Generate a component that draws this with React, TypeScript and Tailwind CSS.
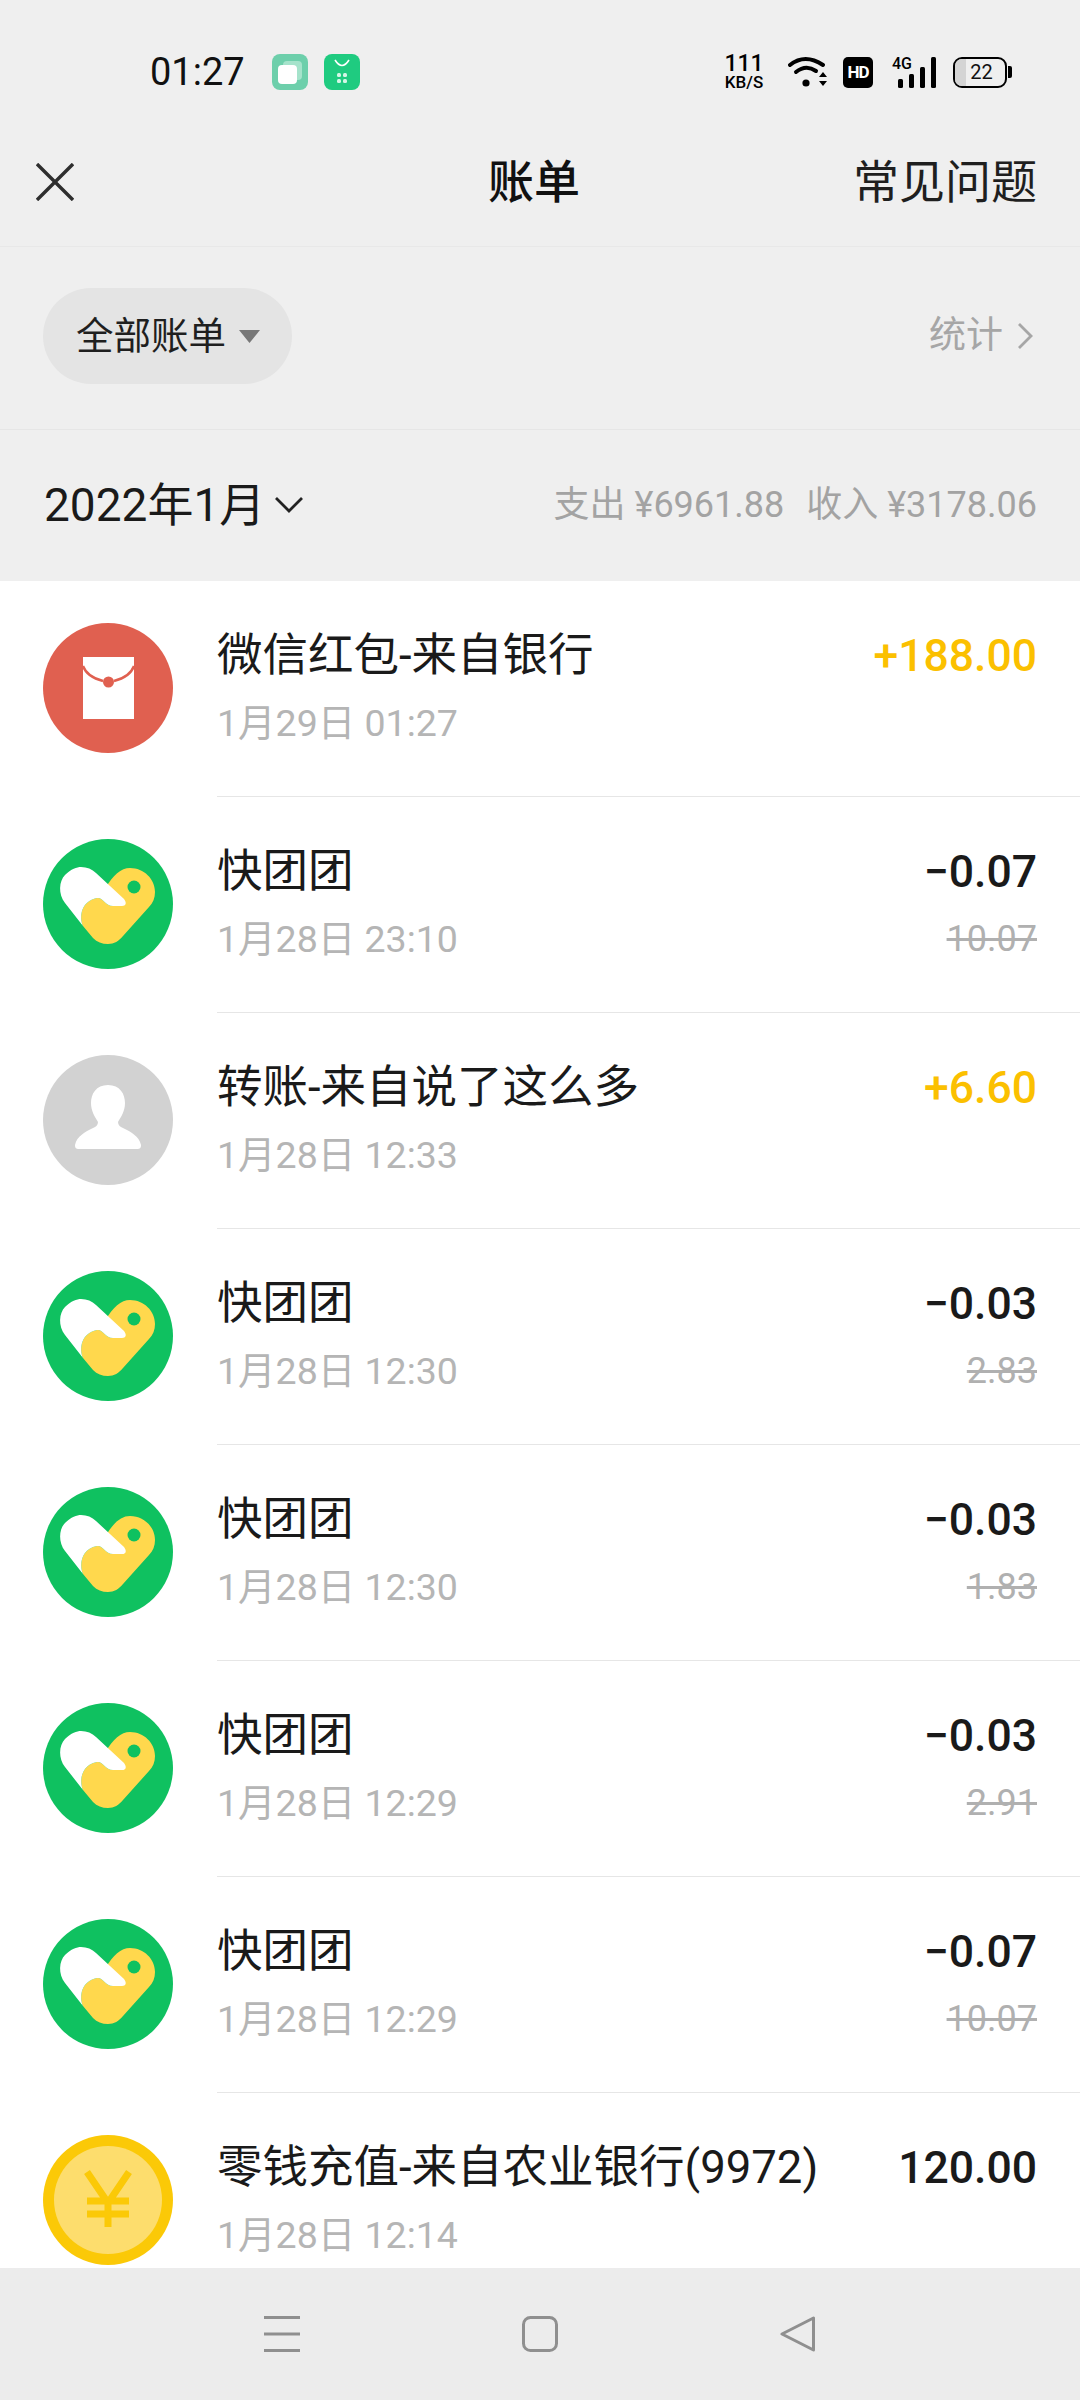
const font = "font-['Roboto','Noto_Sans_CJK_SC',sans-serif]"

type Bill = {
  icon: 'hongbao' | 'tuan' | 'user' | 'coin'
  title: string
  date: string
  amount: string
  income?: boolean
  original?: string
}

const bills: Bill[] = [
  { icon: 'hongbao', title: '微信红包-来自银行', date: '1月29日 01:27', amount: '+188.00', income: true },
  { icon: 'tuan', title: '快团团', date: '1月28日 23:10', amount: '−0.07', original: '10.07' },
  { icon: 'user', title: '转账-来自说了这么多', date: '1月28日 12:33', amount: '+6.60', income: true },
  { icon: 'tuan', title: '快团团', date: '1月28日 12:30', amount: '−0.03', original: '2.83' },
  { icon: 'tuan', title: '快团团', date: '1月28日 12:30', amount: '−0.03', original: '1.83' },
  { icon: 'tuan', title: '快团团', date: '1月28日 12:29', amount: '−0.03', original: '2.91' },
  { icon: 'tuan', title: '快团团', date: '1月28日 12:29', amount: '−0.07', original: '10.07' },
  { icon: 'coin', title: '零钱充值-来自农业银行(9972)', date: '1月28日 12:14', amount: '120.00' },
]

function BillIcon({ icon }: { icon: Bill['icon'] }) {
  if (icon === 'hongbao') {
    return (
      <svg viewBox="0 0 130 130" className="w-[130px] h-[130px] shrink-0">
        <circle cx="65" cy="65" r="65" fill="#e06050" />
        <path d="M40 34H91V96H40Z" fill="#fff" />
        <path d="M40 43Q44 54 60 58M71 58Q87 54 91 43" fill="none" stroke="#e06050" strokeWidth="2.4" />
        <circle cx="65.5" cy="59" r="5.5" fill="#e06050" />
      </svg>
    )
  }
  if (icon === 'tuan') {
    return (
      <svg viewBox="0 0 130 130" className="w-[130px] h-[130px] shrink-0">
        <circle cx="65" cy="65" r="65" fill="#0fc160" />
        <path
          d="M62 50C70 36 78 29 87 29C101 29 112 40 112 53C112 59 110 64 106 68L80 97C76 102 71 105 65 105C59 105 54 103 50 99L40 87C36 78 38 62 54 59C60 58 62 67 70 67L79 67Z"
          fill="#ffd84d"
        />
        <path
          d="M22 64C15 55 16 42 22 36C28 30 34 28 38 28C44 28 49 30 53 34L81 60C84 64 83 67 79 67L70 67C62 67 60 58 54 59C38 62 36 78 40 87Z"
          fill="#fff"
        />
        <circle cx="91" cy="48" r="6.5" fill="#0fc160" />
      </svg>
    )
  }
  if (icon === 'user') {
    return (
      <svg viewBox="0 0 130 130" className="w-[130px] h-[130px] shrink-0">
        <circle cx="65" cy="65" r="65" fill="#d2d2d2" />
        <path
          d="M65 30C77 30 82 39 82 48C82 56 78 62 75 67C75 70 77 72 80 73C88 77 96 81 98 90C98 93 97 94 94 94H36C33 94 32 93 32 90C34 81 42 77 50 73C53 72 55 70 55 67C52 62 48 56 48 48C48 39 53 30 65 30Z"
          fill="#fff"
        />
      </svg>
    )
  }
  return (
    <svg viewBox="0 0 130 130" className="w-[130px] h-[130px] shrink-0">
      <circle cx="65" cy="65" r="65" fill="#fbc907" />
      <circle cx="65" cy="65" r="54" fill="#fddd6d" />
      <path
        d="M44 37L65 68L86 37M65 68V92M44 66H86M44 79H86"
        fill="none"
        stroke="#fbc907"
        strokeWidth="7"
      />
    </svg>
  )
}

function BillRow({ bill }: { bill: Bill }) {
  return (
    <div className="flex h-[216px] shrink-0 items-start pl-[43px]">
      <div className="pt-[42px]">
        <BillIcon icon={bill.icon} />
      </div>
      <div className="ml-[44px] flex h-full flex-1 flex-col border-b border-[#e6e6e6] pr-[43px] pt-[47px]">
        <div className="flex items-center justify-between">
          <span className="text-[45.5px] leading-[56px] text-[#1a1a1a]">{bill.title}</span>
          <span
            className={
              bill.income
                ? 'text-[44.5px] leading-[56px] font-medium text-[#fbc000]'
                : 'text-[44.5px] leading-[56px] font-medium text-[#1a1a1a]'
            }
          >
            {bill.amount}
          </span>
        </div>
        <div className="mt-[17px] flex items-center justify-between">
          <span className="text-[37.5px] leading-[44px] text-[#b5b5b5]">{bill.date}</span>
          {bill.original && (
            <span className="text-[36px] leading-[44px] text-[#b0b0b0] line-through">{bill.original}</span>
          )}
        </div>
      </div>
    </div>
  )
}

export default function App() {
  return (
    <div className={`flex h-[2400px] w-[1080px] flex-col overflow-hidden bg-[#efefef] ${font}`}>
      {/* Status bar */}
      <div className="flex h-[144px] shrink-0 items-center pl-[150px] pr-[68px]">
        <span className="w-[96px] text-[38px] leading-[44px] text-[#111]">01:27</span>
        <svg viewBox="0 0 36 36" className="ml-[26px] h-[36px] w-[36px]">
          <rect width="36" height="36" rx="8" fill="#6dcfab" />
          <rect x="11" y="7" width="19" height="19" rx="4" fill="#a5e3cb" />
          <rect x="6" y="11" width="19" height="19" rx="4" fill="#fff" />
        </svg>
        <svg viewBox="0 0 36 36" className="ml-[16px] h-[36px] w-[36px]">
          <rect width="36" height="36" rx="8" fill="#1fcb80" />
          <path d="M11 6Q18 17 25 6" fill="none" stroke="#fff" strokeWidth="1.6" />
          <rect x="13" y="19" width="4" height="4" rx="1.5" fill="#d5f5e6" />
          <rect x="19" y="19" width="4" height="4" rx="1.5" fill="#d5f5e6" />
          <rect x="13" y="25" width="4" height="4" rx="1.5" fill="#d5f5e6" />
          <rect x="19" y="25" width="4" height="4" rx="1.5" fill="#d5f5e6" />
        </svg>
        <div className="ml-auto flex w-[42px] flex-col items-center">
          <span className="text-[23px] leading-[21px] font-medium text-black">111</span>
          <span className="text-[17px] leading-[17px] font-medium text-black">KB/S</span>
        </div>
        <svg viewBox="0 0 40 32" className="ml-[23px] h-[32px] w-[40px]">
          <path d="M2 9Q17 -3 35 9" fill="none" stroke="#000" strokeWidth="4" strokeLinecap="round" />
          <path d="M8 16Q18 8 28 15" fill="none" stroke="#000" strokeWidth="4" strokeLinecap="round" />
          <circle cx="18" cy="27" r="3.6" fill="#000" />
          <path d="M31 21L35 16L39 21ZM31 25L35 30L39 25Z" fill="#000" />
        </svg>
        <div className="ml-[15px] flex h-[31px] w-[30px] items-center justify-center rounded-[5px] bg-black text-[17px] leading-none font-bold tracking-[-1px] text-white">
          HD
        </div>
        <div className="ml-[19px] relative h-[31px] w-[44px]">
          <span className="absolute left-0 top-[-2px] text-[16px] leading-[18px] font-medium text-black">4G</span>
          <svg viewBox="0 0 44 31" className="h-[31px] w-[44px]">
            <rect x="6" y="22" width="5" height="9" rx="1.5" fill="#000" />
            <rect x="17" y="17" width="5" height="14" rx="1.5" fill="#000" />
            <rect x="28" y="10" width="5" height="21" rx="1.5" fill="#000" />
            <rect x="39" y="0" width="5" height="31" rx="1.5" fill="#000" />
          </svg>
        </div>
        <div className="ml-[17px] flex items-center">
          <div className="relative flex h-[31px] w-[54px] items-center justify-center overflow-hidden rounded-[9px] border-[2.5px] border-black">
            <div className="absolute inset-y-0 left-0 w-[11px] bg-[#d4d4d4]" />
            <span className="relative pl-[3px] text-[20px] leading-none text-[#111]">22</span>
          </div>
          <div className="ml-[1px] h-[12px] w-[4px] rounded-r-[2px] bg-black" />
        </div>
      </div>

      {/* Header */}
      <div className="relative flex h-[103px] shrink-0 items-center justify-between border-b border-[#e8e8e8] pb-[26px] pl-[36px] pr-[43px]">
        <svg viewBox="0 0 38 38" className="h-[38px] w-[38px]">
          <path d="M1 1L37 37M37 1L1 37" stroke="#2e2e2e" strokeWidth="3.4" />
        </svg>
        <span className="absolute left-0 right-[12px] text-center text-[46px] leading-[60px] font-medium text-[#111]">
          账单
        </span>
        <span className="text-[46px] leading-[60px] text-[#1f1f1f]">常见问题</span>
      </div>

      {/* Filter */}
      <div className="flex h-[183px] shrink-0 items-center justify-between border-b border-[#e6e6e6] pb-[4px] pl-[43px] pr-[47px]">
        <div className="flex h-[96px] w-[249px] items-center rounded-full bg-[#e4e4e4] pl-[33px]">
          <span className="text-[37.5px] leading-[48px] text-[#1f1f1f]">全部账单</span>
          <svg viewBox="0 0 21 13" className="ml-[13px] h-[13px] w-[21px]">
            <path d="M0 0H21L10.5 13Z" fill="#777" />
          </svg>
        </div>
        <div className="flex items-center">
          <span className="text-[37px] leading-[48px] text-[#a6a6a6]">统计</span>
          <svg viewBox="0 0 16 26" className="ml-[14px] h-[26px] w-[16px]">
            <path d="M2 1L14 13L2 25" fill="none" stroke="#a6a6a6" strokeWidth="2.8" />
          </svg>
        </div>
      </div>

      {/* Month */}
      <div className="flex h-[151px] shrink-0 items-center justify-between pb-[1px] pl-[44px] pr-[43px]">
        <div className="flex items-center">
          <span className="text-[46px] leading-[60px] text-[#1a1a1a]">2022年1月</span>
          <svg viewBox="0 0 28 16" className="ml-[10px] h-[16px] w-[28px]">
            <path d="M1 1L14 14L27 1" fill="none" stroke="#222" strokeWidth="2.8" />
          </svg>
        </div>
        <div className="flex items-center text-[36px] leading-[48px] text-[#a3a3a3]">
          <span>支出 ¥6961.88</span>
          <span className="ml-[22px]">收入 ¥3178.06</span>
        </div>
      </div>

      {/* Bills */}
      <div className="flex flex-1 flex-col overflow-hidden bg-white">
        {bills.map((bill, i) => (
          <BillRow key={i} bill={bill} />
        ))}
      </div>

      {/* Navigation bar */}
      <div className="flex h-[132px] shrink-0 items-start bg-[#ececec] pl-[264px] pt-[48px]">
        <svg viewBox="0 0 36 36" className="h-[36px] w-[36px]">
          <path d="M0 1.5H36M0 18H36M0 34.5H36" stroke="#8f8f8f" strokeWidth="3" />
        </svg>
        <svg viewBox="0 0 36 36" className="ml-[222px] h-[36px] w-[36px]">
          <rect x="1.5" y="1.5" width="33" height="33" rx="7" fill="none" stroke="#8f8f8f" strokeWidth="3" />
        </svg>
        <svg viewBox="0 0 36 36" className="ml-[222px] h-[36px] w-[36px]">
          <path d="M33.5 2V34L2 18Z" fill="none" stroke="#8f8f8f" strokeWidth="3" strokeLinejoin="round" />
        </svg>
      </div>
    </div>
  )
}
